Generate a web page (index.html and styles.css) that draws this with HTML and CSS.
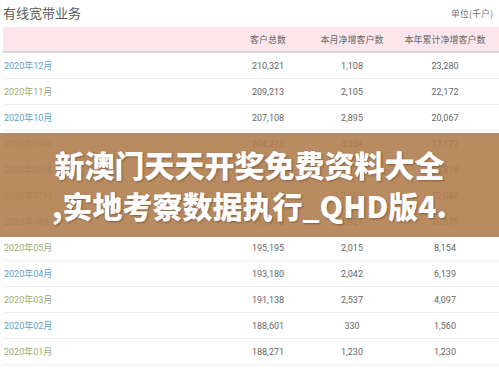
FILE: index.html
```html
<!DOCTYPE html>
<html lang="zh">
<head>
<meta charset="utf-8">
<link rel="stylesheet" href="styles.css">
</head>
<body>
<div class="page">
  <div class="top">
    <div class="title">有线宽带业务</div>
    <div class="unit">单位(千户)</div>
  </div>
  <div class="table">
    <div class="row head">
      <div class="c1"></div>
      <div class="cn">客户总数</div>
      <div class="cn">本月净增客户数</div>
      <div class="cn">本年累计净增客户数</div>
    </div>
    <div class="row"><div class="c1 even">2020年12月</div><div class="cn">210,321</div><div class="cn">1,108</div><div class="cn">23,280</div></div>
    <div class="row"><div class="c1 odd">2020年11月</div><div class="cn">209,213</div><div class="cn">2,105</div><div class="cn">22,172</div></div>
    <div class="row"><div class="c1 even">2020年10月</div><div class="cn">207,108</div><div class="cn">2,895</div><div class="cn">20,067</div></div>
    <div class="row"><div class="c1 odd">2020年09月</div><div class="cn">204,213</div><div class="cn">3,354</div><div class="cn">17,172</div></div>
    <div class="row"><div class="c1 even">2020年08月</div><div class="cn">200,859</div><div class="cn">1,734</div><div class="cn">13,818</div></div>
    <div class="row"><div class="c1 odd">2020年07月</div><div class="cn">199,125</div><div class="cn">2,009</div><div class="cn">12,084</div></div>
    <div class="row"><div class="c1 even">2020年06月</div><div class="cn">197,116</div><div class="cn">1,921</div><div class="cn">10,075</div></div>
    <div class="row"><div class="c1 odd">2020年05月</div><div class="cn">195,195</div><div class="cn">2,015</div><div class="cn">8,154</div></div>
    <div class="row"><div class="c1 even">2020年04月</div><div class="cn">193,180</div><div class="cn">2,042</div><div class="cn">6,139</div></div>
    <div class="row"><div class="c1 odd">2020年03月</div><div class="cn">191,138</div><div class="cn">2,537</div><div class="cn">4,097</div></div>
    <div class="row"><div class="c1 even">2020年02月</div><div class="cn">188,601</div><div class="cn">330</div><div class="cn">1,560</div></div>
    <div class="row"><div class="c1 odd">2020年01月</div><div class="cn">188,271</div><div class="cn">1,230</div><div class="cn">1,230</div></div>
  </div>
  <div class="banner">
    <div class="banner-line">新澳门天天开奖免费资料大全</div>
    <div class="banner-line">,实地考察数据执行_QHD版4.</div>
  </div>
</div>
</body>
</html>
```
FILE: styles.css
```css
html, body {
  margin: 0;
  padding: 0;
  background: #ffffff;
  overflow: hidden;
}
body {
  width: 499px;
  height: 371px;
  font-family: "Roboto", "Noto Sans CJK SC", sans-serif;
}
.page {
  position: relative;
  width: 499px;
  height: 371px;
  padding-left: 3px;
  box-sizing: border-box;
}
.top {
  display: flex;
  justify-content: space-between;
  align-items: center;
  height: 27px;
  padding-right: 6px;
}
.title {
  font-family: "Noto Sans CJK SC", sans-serif;
  font-size: 13px;
  color: #5a5a5a;
  margin-top: -2px;
}
.unit {
  font-family: "Noto Sans CJK SC", sans-serif;
  font-size: 9px;
  color: #777777;
}
.table {
  display: flex;
  flex-direction: column;
  width: 520px;
}
.row {
  display: grid;
  grid-template-columns: 225px 80px 88px 98px 1fr;
  align-items: center;
  height: 25px;
  border-bottom: 1px solid #eeeeee;
  font-size: 9px;
  color: #666666;
}
.row.head {
  height: 24px;
  background: #fce6ec;
  border-bottom: 2px solid #dcd3d5;
  color: #666666;
  font-family: "Noto Sans CJK SC", sans-serif;
}
.cn {
  text-align: center;
}
.c1 {
  padding-left: 1px;
}
.even { color: #5b9fd0; }
.odd { color: #9dac6c; }
.banner {
  position: absolute;
  left: 0;
  top: 133px;
  width: 499px;
  height: 104px;
  background: rgba(176, 126, 80, 0.9);
  display: flex;
  flex-direction: column;
  justify-content: center;
  align-items: center;
}
.banner-line {
  font-family: "Noto Sans CJK SC", sans-serif;
  font-weight: 900;
  font-size: 30px;
  line-height: 41px;
  color: #ffffff;
  white-space: nowrap;
  text-shadow: 1px 1px 2px rgba(60, 30, 10, 0.4);
}
```
